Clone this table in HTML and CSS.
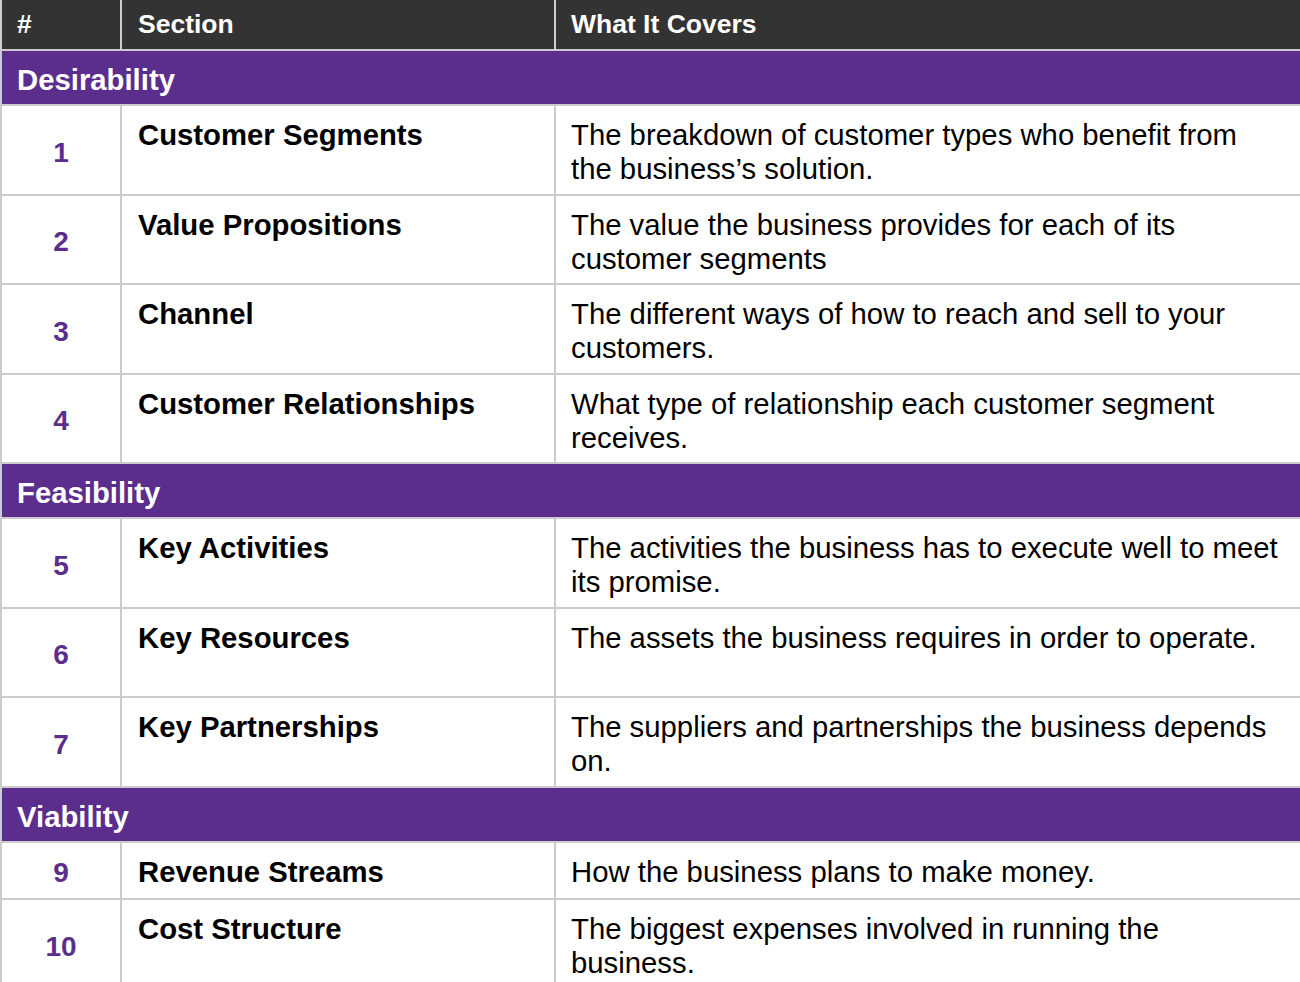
FILE: index.html
```html
<!DOCTYPE html>
<html>
<head>
<meta charset="utf-8">
<link rel="stylesheet" href="styles.css">
</head>
<body>
<table class="bmc">
  <colgroup>
    <col class="c-num">
    <col class="c-sec">
    <col class="c-desc">
  </colgroup>
  <thead>
    <tr class="head">
      <th>#</th>
      <th>Section</th>
      <th>What It Covers</th>
    </tr>
  </thead>
  <tbody>
    <tr class="group"><td colspan="3">Desirability</td></tr>
    <tr class="item tall"><td class="num">1</td><td class="sec">Customer Segments</td><td class="desc">The breakdown of customer types who benefit from<br>the business’s solution.</td></tr>
    <tr class="item"><td class="num">2</td><td class="sec">Value Propositions</td><td class="desc">The value the business provides for each of its customer segments</td></tr>
    <tr class="item tall"><td class="num">3</td><td class="sec">Channel</td><td class="desc">The different ways of how to reach and sell to your customers.</td></tr>
    <tr class="item"><td class="num">4</td><td class="sec">Customer Relationships</td><td class="desc">What type of relationship each customer segment receives.</td></tr>
    <tr class="group"><td colspan="3">Feasibility</td></tr>
    <tr class="item tall"><td class="num">5</td><td class="sec">Key Activities</td><td class="desc">The activities the business has to execute well to meet its promise.</td></tr>
    <tr class="item"><td class="num">6</td><td class="sec">Key Resources</td><td class="desc">The assets the business requires in order to operate.</td></tr>
    <tr class="item tall"><td class="num">7</td><td class="sec">Key Partnerships</td><td class="desc">The suppliers and partnerships the business depends on.</td></tr>
    <tr class="group"><td colspan="3">Viability</td></tr>
    <tr class="item short"><td class="num">9</td><td class="sec">Revenue Streams</td><td class="desc">How the business plans to make money.</td></tr>
    <tr class="item tall"><td class="num">10</td><td class="sec">Cost Structure</td><td class="desc">The biggest expenses involved in running the business.</td></tr>
  </tbody>
</table>
</body>
</html>
```

FILE: styles.css
```css
html, body {
  margin: 0;
  padding: 0;
  background: #ffffff;
}

body {
  font-family: "Liberation Sans", Arial, sans-serif;
  color: #000000;
  overflow: hidden;
}

.bmc {
  width: 1300px;
  border-collapse: collapse;
  table-layout: fixed;
}

.c-num { width: 120px; }
.c-sec { width: 434px; }
.c-desc { width: 746px; }

.bmc th,
.bmc td {
  border: 2px solid #cccccc;
  box-sizing: border-box;
}

.head th {
  background: #333333;
  color: #ffffff;
  font-size: 26.5px;
  font-weight: bold;
  text-align: left;
  height: 50px;
  padding: 0 15px;
  border-top: 0;
  vertical-align: middle;
}

.head th:nth-child(2) {
  padding-left: 16px;
}

.group td {
  background: #5b2d8c;
  color: #ffffff;
  font-size: 29.3px;
  font-weight: bold;
  height: 55px;
  padding: 4px 15px 0 15px;
  vertical-align: middle;
}

.item td {
  height: 89px;
  font-size: 29.3px;
  line-height: 34px;
  vertical-align: top;
  padding: 12px 15px 4px 15px;
}

.item.tall td {
  height: 90px;
}

.item.short td {
  height: 57px;
}

.item td.num {
  color: #5b2d8c;
  font-weight: bold;
  font-size: 28px;
  text-align: center;
  vertical-align: middle;
  padding: 5px 0 0 0;
}

.item td.sec {
  font-weight: bold;
  padding-left: 16px;
}

.item td.desc {
  padding-left: 15px;
}
```
